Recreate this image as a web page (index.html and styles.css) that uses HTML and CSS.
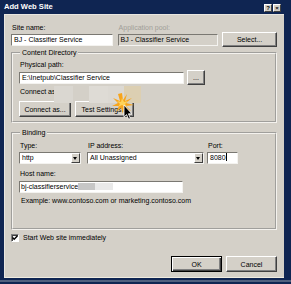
FILE: index.html
```html
<!DOCTYPE html>
<html lang="en">
<head>
    <meta charset="UTF-8">
    <title>Add Web Site</title>
    <link rel="stylesheet" href="styles.css">
</head>
<body>
    <div class="window">
        <div class="titlebar">
            <span class="title">Add Web Site</span>
            <div class="title-buttons">
                <span class="tbtn">?</span>
                <span class="tbtn">×</span>
            </div>
        </div>
        <div class="dialog">
            <div class="top-row">
                <div class="field site-field">
                    <div class="label">Site name:</div>
                    <div class="input">BJ - Classifier Service</div>
                </div>
                <div class="field pool-field">
                    <div class="label disabled">Application pool:</div>
                    <div class="input readonly">BJ - Classifier Service</div>
                </div>
                <button class="btn select-btn">Select...</button>
            </div>

            <fieldset class="group content-group">
                <legend>Content Directory</legend>
                <div class="label">Physical path:</div>
                <div class="path-row">
                    <div class="input path-input">E:\Inetpub\Classifier Service</div>
                    <button class="btn browse-btn">...</button>
                </div>
                <div class="label connect-label">Connect as</div>
                <div class="btn-row">
                    <button class="btn connect-btn">Connect as...</button>
                    <button class="btn test-btn">Test Settings...</button>
                </div>
            </fieldset>

            <fieldset class="group binding-group">
                <legend>Binding</legend>
                <div class="binding-row">
                    <div class="field type-field">
                        <div class="label">Type:</div>
                        <div class="input select">http<span class="drop"></span></div>
                    </div>
                    <div class="field ip-field">
                        <div class="label">IP address:</div>
                        <div class="input select">All Unassigned<span class="drop"></span></div>
                    </div>
                    <div class="field port-field">
                        <div class="label">Port:</div>
                        <div class="input">8080<span class="caret"></span></div>
                    </div>
                </div>
                <div class="label host-label">Host name:</div>
                <div class="input host-input">bj-classifierservice<span class="smear dark"></span><span class="smear light"></span></div>
                <div class="example">Example: www.contoso.com or marketing.contoso.com</div>
            </fieldset>

            <div class="check-row">
                <span class="checkbox">
                    <svg width="6" height="6" viewBox="0 0 6 6"><path d="M0.5 2.5 L2.2 4.3 L5.5 0.8" fill="none" stroke="#000" stroke-width="1.4"/></svg>
                </span>
                <span class="check-label">Start Web site immediately</span>
            </div>

            <div class="footer">
                <button class="btn default-btn">OK</button>
                <button class="btn">Cancel</button>
            </div>

            <!-- leftover smudges from the capture -->
            <div class="ghost g1"></div>
            <div class="ghost g2"></div>
            <div class="ghost g3"></div>
            <div class="ghost g4"></div>

            <svg class="pointer" width="26" height="30" viewBox="0 0 26 30">
                <polygon points="12,1 13,8 17,2 15,9 22,6 16,11 24,13 16,14 21,19 14,16 13,22 11,16 6,20 9,14 2,14 8,11 3,6 10,9 8,2" fill="#f7a51c"/>
                <polygon points="12,6 14,10 18,9 15,12 17,15 12,13 8,15 10,12 7,9 11,10" fill="#ffd35a"/>
                <path d="M14 13 L14 25 L16.6 22.6 L18.6 27.2 L20.4 26.4 L18.4 21.8 L21.8 21.8 Z" fill="#000" stroke="#fff" stroke-width="0.8"/>
            </svg>
        </div>
        <div class="frame-bottom"></div>
    </div>
</body>
</html>
```

FILE: styles.css
```css
body {
    margin: 0;
    padding: 0;
    background-color: #0f2552;
    font-family: 'Liberation Sans', Arial, sans-serif;
    font-size: 7px;
    color: #000000;
}
.window {
    width: 291px;
    height: 284px;
    background-color: #0f2552;
    display: flex;
    flex-direction: column;
}
.titlebar {
    height: 14px;
    display: flex;
    align-items: center;
    justify-content: space-between;
    padding: 0 10px 0 4px;
}
.title {
    color: #ffffff;
    font-weight: bold;
    font-size: 7.6px;
    line-height: 10px;
}
.title-buttons {
    display: flex;
    gap: 1px;
    margin-top: 2px;
}
.tbtn {
    width: 8px;
    height: 8px;
    box-sizing: border-box;
    background-color: #d4d0c8;
    border: 1px solid;
    border-color: #ffffff #404040 #404040 #ffffff;
    font-size: 6px;
    font-weight: bold;
    line-height: 6px;
    text-align: center;
}
.dialog {
    position: relative;
    height: 264px;
    margin: 0 7px 0 4px;
    padding: 9px 7px 0 6px;
    box-sizing: border-box;
    background-color: #d4d0c8;
    border-top: 1px solid #e8e6e0;
    border-left: 1px solid #e8e6e0;
    border-bottom: 1px solid #f0ece0;
}
.frame-bottom {
    flex: 1;
    background: linear-gradient(to bottom, #0f2552 0 2px, #50607e 2px 4px, #0f2552 4px);
}
.label {
    height: 8px;
    line-height: 8px;
    padding-left: 1px;
    margin-bottom: 2px;
    white-space: nowrap;
}
.label.disabled {
    color: #a19e98;
}
.input {
    position: relative;
    height: 12px;
    line-height: 10px;
    box-sizing: border-box;
    padding: 0 2px;
    background-color: #ffffff;
    border: 1px solid;
    border-color: #7a7872 #f4f3f0 #f4f3f0 #7a7872;
    white-space: nowrap;
    overflow: hidden;
}
.input.readonly {
    background-color: #d4d0c8;
}
.btn {
    height: 16px;
    box-sizing: border-box;
    padding: 0;
    margin: 0;
    font-family: 'Liberation Sans', Arial, sans-serif;
    font-size: 7px;
    color: #000000;
    background-color: #d4d0c8;
    border: 1px solid;
    border-color: #ffffff #404040 #404040 #ffffff;
    box-shadow: inset -1px -1px 0 #808080;
}
.top-row {
    display: flex;
    align-items: flex-end;
}
.site-field {
    width: 102px;
}
.pool-field {
    width: 101px;
    margin-left: 5px;
}
.select-btn {
    width: 55px;
    height: 15px;
    margin-left: 4px;
    margin-bottom: -1px;
}
.group {
    margin: 3px 0 0 0;
    width: 266px;
    box-sizing: border-box;
    padding: 0 6px 4px 6px;
    border: 2px groove #f4f2ee;
}
.group legend {
    padding: 0 2px;
    margin-left: 1px;
    height: 8px;
    line-height: 8px;
}
.content-group .label:first-of-type {
    margin-top: 4px;
}
.path-row {
    display: flex;
    align-items: center;
    height: 15px;
    margin-top: -1px;
}
.path-input {
    width: 165px;
}
.browse-btn {
    width: 18px;
    height: 15px;
    margin-left: 3px;
    line-height: 8px;
}
.connect-label {
    margin-top: 3px;
    margin-bottom: 5px;
}
.btn-row {
    display: flex;
    gap: 4px;
}
.connect-btn {
    width: 52px;
}
.test-btn {
    width: 59px;
}
.binding-group {
    margin-top: 6px;
    padding-bottom: 23px;
}
.binding-row {
    display: flex;
    margin-top: 5px;
}
.type-field {
    width: 62px;
}
.ip-field {
    width: 117px;
    margin-left: 6px;
}
.port-field {
    width: 31px;
    margin-left: 3px;
}
.select {
    padding-right: 11px;
}
.drop {
    position: absolute;
    top: 0;
    right: 0;
    width: 9px;
    height: 10px;
    box-sizing: border-box;
    background-color: #d4d0c8;
    border: 1px solid;
    border-color: #ffffff #404040 #404040 #ffffff;
}
.drop::after {
    content: "";
    position: absolute;
    left: 1px;
    top: 3px;
    border-left: 2.5px solid transparent;
    border-right: 2.5px solid transparent;
    border-top: 3px solid #000000;
}
.caret {
    display: inline-block;
    width: 1px;
    height: 8px;
    background-color: #000000;
    vertical-align: -1px;
}
.host-label {
    margin-top: 6px;
    margin-bottom: 3px;
}
.host-input {
    width: 164px;
    padding-left: 1px;
}
.smear {
    display: inline-block;
    width: 17px;
    height: 7px;
    vertical-align: -1px;
}
.smear.dark {
    background-color: #c6c6c6;
}
.smear.light {
    width: 18px;
    background-color: #e9e9e9;
}
.example {
    margin-top: 4px;
    padding-left: 2px;
    line-height: 8px;
    white-space: nowrap;
}
.check-row {
    display: flex;
    align-items: center;
    margin-top: 4px;
    height: 8px;
}
.checkbox {
    width: 8px;
    height: 8px;
    box-sizing: border-box;
    background-color: #ffffff;
    border: 1px solid;
    border-color: #808080 #ffffff #ffffff #808080;
    box-shadow: inset 1px 1px 0 #404040;
    display: flex;
    align-items: center;
    justify-content: center;
}
.check-label {
    margin-left: 4px;
    line-height: 8px;
}
.footer {
    display: flex;
    justify-content: flex-end;
    gap: 4px;
    margin-top: 14px;
}
.footer .btn {
    width: 51px;
}
.default-btn {
    border: 1px solid #000000;
    box-shadow: inset 1px 1px 0 #ffffff, inset -1px -1px 0 #404040, inset -2px -2px 0 #808080;
}
.ghost {
    position: absolute;
    top: 71px;
    height: 17px;
}
.g1 { left: 49px; width: 19px; background-color: #dad7d1; }
.g2 { left: 84px; width: 19px; background-color: #dedbd5; }
.g3 { left: 103px; width: 16px; background-color: #dcd9d3; }
.g4 { left: 119px; width: 17px; background-color: #dccfb2; }
.pointer {
    position: absolute;
    left: 105px;
    top: 77px;
}
```
